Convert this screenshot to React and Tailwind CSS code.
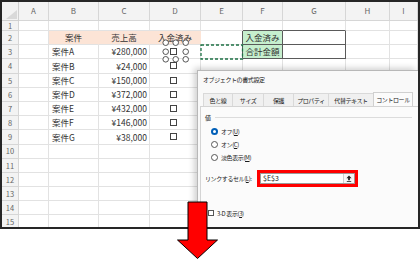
import React from 'react';

const colW = ['w-[17px]', 'w-[30px]', 'w-[50px]', 'w-[51px]', 'w-[51px]', 'w-[42px]', 'w-[40px]', 'w-[63px]', 'w-[44px]', 'w-[28px]'];
const letters = ['A', 'B', 'C', 'D', 'E', 'F', 'G', 'H', 'I'];

const data = {
  3: ['案件A', '¥280,000'],
  4: ['案件B', '¥24,000'],
  5: ['案件C', '¥150,000'],
  6: ['案件D', '¥372,000'],
  7: ['案件E', '¥432,000'],
  8: ['案件F', '¥146,000'],
  9: ['案件G', '¥38,000'],
};

function Box() {
  return <div className="w-[7px] h-[7px] border border-[#444] bg-white" />;
}

function Cell({ r, c }) {
  const peach = r === 2 && c >= 2 && c <= 4;
  const green = c === 6 && (r === 2 || r === 3);
  const darkR = (r === 2 || r === 3) && (c === 5 || c === 6 || c === 7);
  const darkB = (r === 1 || r === 2 || r === 3) && (c === 6 || c === 7);
  const bg = peach ? 'bg-[#fce4d6]' : green ? 'bg-[#c6efce]' : 'bg-white';
  const br = darkR ? 'border-r-[#5a5a5a]' : peach ? 'border-r-[#fce4d6]' : 'border-r-[#e2e2e2]';
  const bb = darkB ? 'border-b-[#5a5a5a]' : 'border-b-[#e2e2e2]';
  let content = null;
  let align = 'justify-center';
  if (r === 2) {
    if (c === 2) content = '案件';
    if (c === 3) content = '売上高';
    if (c === 4) content = '入金済み';
    if (c === 6) content = '入金済み';
  }
  if (r === 3 && c === 6) content = '合計金額';
  if (data[r]) {
    if (c === 2) {
      content = data[r][0];
      align = 'justify-start pl-[3px]';
    }
    if (c === 3) {
      content = data[r][1];
      align = 'justify-end pr-[2px]';
    }
    if (c === 4) {
      content = <Box />;
      align = 'justify-center pr-[3px]';
    }
  }
  return (
    <div className={`${colW[c]} shrink-0 h-full border-r border-b ${br} ${bb} ${bg} flex items-center ${align} text-[8.5px] text-[#333] whitespace-nowrap overflow-hidden`}>
      {content}
    </div>
  );
}

function Row({ r }) {
  const partial = r === 1;
  return (
    <div className={`flex shrink-0 ${partial ? 'h-[10px]' : 'h-[14.2px]'}`}>
      <div className={`${colW[0]} shrink-0 h-full bg-[#f3f3f3] border-r border-b border-[#d6d6d6] flex justify-center ${partial ? 'items-start' : 'items-center'} text-[7.5px] text-[#666] overflow-hidden`}>
        <span className={partial ? '-mt-[1px]' : ''}>{r}</span>
      </div>
      {letters.map((_, i) => (
        <Cell key={i} r={r} c={i + 1} />
      ))}
    </div>
  );
}

function Radio({ on, label, u }) {
  return (
    <div className="h-[13px] flex items-center pl-[10px]">
      {on ? (
        <div className="w-[7px] h-[7px] rounded-full bg-[#005fb8] flex items-center justify-center">
          <div className="w-[3px] h-[3px] rounded-full bg-white" />
        </div>
      ) : (
        <div className="w-[7px] h-[7px] rounded-full border border-[#555] bg-white" />
      )}
      <span className="ml-[3px]">
        {label}(<span className="underline">{u}</span>)
      </span>
    </div>
  );
}

const tabs = [
  ['色と線', 'w-[29px]'],
  ['サイズ', 'w-[31px]'],
  ['保護', 'w-[30px]'],
  ['プロパティ', 'w-[35px]'],
  ['代替テキスト', 'w-[45px]'],
];

function Dialog() {
  return (
    <div className="absolute left-[195px] top-[68px] right-0 bottom-0 bg-[#f9f9f9] border-l border-t border-[#b8b8b8] shadow-[-3px_-2px_6px_rgba(0,0,0,0.18)] flex flex-col text-[6px] tracking-[-0.4px] text-[#1a1a1a]">
      <div className="h-[17px] pl-[5px] flex items-center">オブジェクトの書式設定</div>
      <div className="mt-[4px] pl-[5px] flex h-[14px] items-end">
        {tabs.map(([t, w]) => (
          <div key={t} className={`${w} h-[13px] shrink-0 bg-[#f0f0f0] border-t border-l border-[#d9d9d9] flex items-center justify-center`}>
            {t}
          </div>
        ))}
        <div className="w-[40px] h-[14px] shrink-0 bg-[#fbfbfb] border-t border-l border-r border-[#d0d0d0] flex items-center justify-center">
          コントロール
        </div>
      </div>
      <div className="flex-1 ml-[2px] border-t border-l border-[#d4d4d4] bg-[#fbfbfb] flex flex-col">
        <div className="mt-[5px] h-[10px] flex items-center pl-[4px]">
          <span>値</span>
          <div className="flex-1 border-t border-[#dcdcdc] ml-[4px] mr-[6px]" />
        </div>
        <div className="mt-[3px] flex flex-col">
          <Radio on label="オフ" u="U" />
          <Radio label="オン" u="C" />
          <Radio label="淡色表示" u="M" />
        </div>
        <div className="mt-[6px] h-[17px] flex items-center">
          <div className="w-[56px] shrink-0 pl-[4px] whitespace-nowrap">
            リンクするセル(<span className="underline">L</span>):
          </div>
          <div className="w-[101px] h-[17px] shrink-0 border-[3px] border-[#ff0000] flex">
            <div className="flex-1 bg-white border border-[#9a9a9a] flex">
              <div className="flex-1 flex items-center pl-[2px] text-[7px] tracking-normal">$E$3</div>
              <div className="w-[11px] border-l border-[#d0d0d0] bg-[#f7f7f7] flex items-center justify-center">
                <svg width="6" height="7" viewBox="0 0 6 7">
                  <path d="M3 0.5 L5.6 3.2 L3.9 3.2 L3.9 5.2 L2.1 5.2 L2.1 3.2 L0.4 3.2 Z" fill="#222" />
                  <rect x="0.8" y="6" width="4.4" height="0.8" fill="#222" />
                </svg>
              </div>
            </div>
          </div>
        </div>
        <div className="mt-[21px] h-[10px] flex items-center pl-[7px]">
          <div className="w-[6px] h-[6px] border border-[#555] bg-white" />
          <span className="ml-[3px]">
            3-D 表示(<span className="underline">3</span>)
          </span>
        </div>
      </div>
    </div>
  );
}

export default function App() {
  const rows = [];
  for (let r = 1; r <= 15; r++) rows.push(r);
  return (
    <div className="relative w-[420px] h-[260px] bg-white overflow-hidden font-['Noto_Sans_CJK_JP','Noto_Sans',sans-serif]">
      <div className="relative w-[420px] h-[229px] border-2 border-[#262626] overflow-hidden bg-white flex flex-col">
        <div className="flex h-[19px] shrink-0">
          <div className={`${colW[0]} shrink-0 h-full bg-[#f3f3f3] border-r border-b border-[#d0d0d0] flex items-end justify-end`}>
            <svg width="11" height="9" viewBox="0 0 11 9" className="mb-[1px] mr-[1px]">
              <polygon points="11,0 11,9 0,9" fill="#d9d9d9" />
            </svg>
          </div>
          {letters.map((l, i) => (
            <div key={l} className={`${colW[i + 1]} shrink-0 h-full bg-[#f3f3f3] border-r border-b border-[#d6d6d6] flex items-center justify-center text-[8px] text-[#666]`}>
              {l}
            </div>
          ))}
        </div>
        {rows.map((r) => (
          <Row key={r} r={r} />
        ))}

        {/* marching ants around E3 */}
        <svg className="absolute left-[198px] top-[42px]" width="44" height="16" viewBox="0 0 44 16">
          <rect x="1" y="1" width="41.5" height="14" fill="none" stroke="#1e7145" strokeWidth="1.3" strokeDasharray="3 2" />
        </svg>

        {/* selection handles around checkbox D3 */}
        <svg className="absolute left-[158px] top-[36px]" width="32" height="27" viewBox="0 0 32 27">
          {[
            [5.7, 4.7], [15.7, 4.7], [25.7, 4.7],
            [5.7, 13.7], [25.7, 13.7],
            [5.7, 21.3], [15.7, 21.3], [25.7, 21.3],
          ].map(([x, y], i) => (
            <circle key={i} cx={x} cy={y} r="2.8" fill="white" stroke="#444" strokeWidth="0.9" />
          ))}
        </svg>

        <Dialog />
      </div>

      {/* red arrow */}
      <svg className="absolute left-[177px] top-[201px]" width="42" height="59" viewBox="0 0 42 59">
        <polygon points="11,1 30,1 30,39 40.5,39 20.5,57.5 0.5,39 11,39" fill="#ff0000" stroke="#000" strokeWidth="1" />
      </svg>
    </div>
  );
}
